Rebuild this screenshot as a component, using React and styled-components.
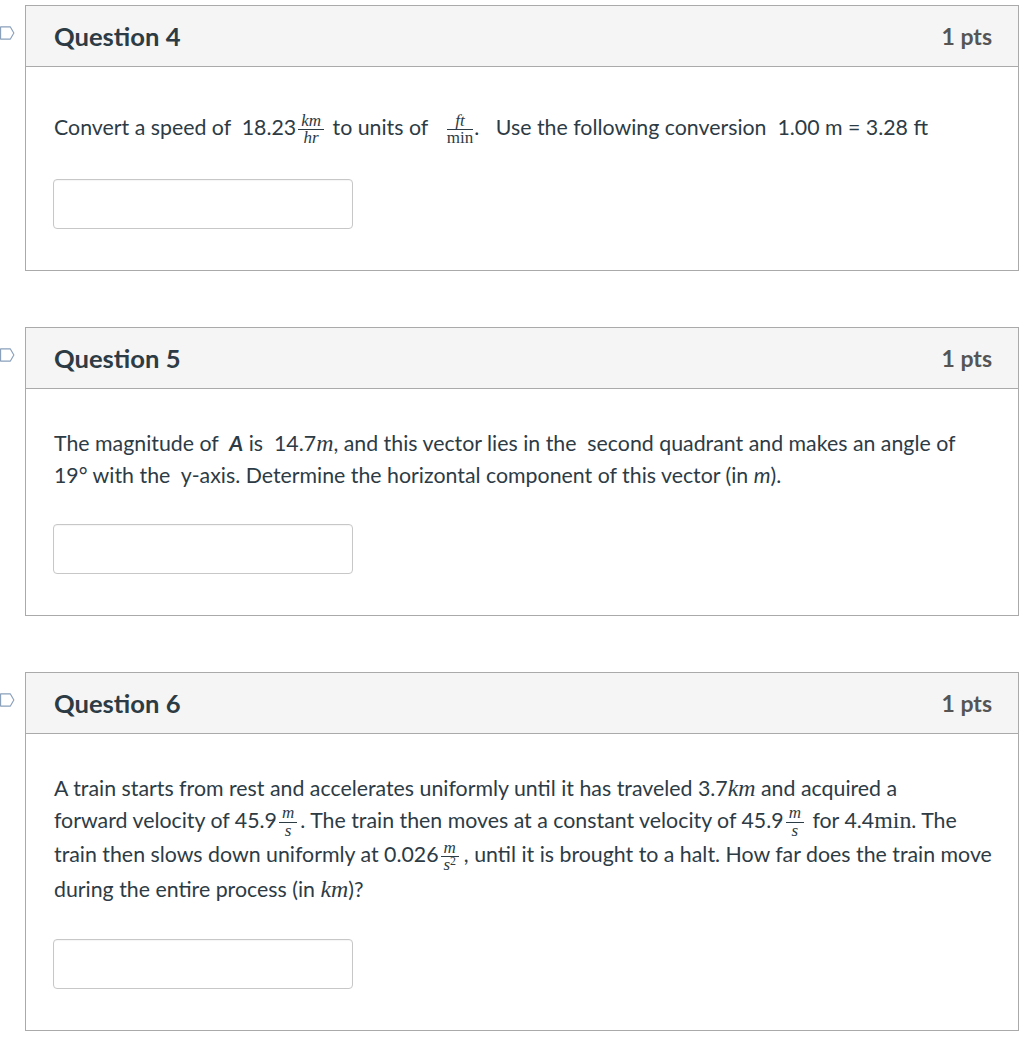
import React from "react";
import styled, { createGlobalStyle } from "styled-components";

const Global = createGlobalStyle`
  html, body { margin: 0; padding: 0; background: #fff; }
  body { font-family: Lato, "Noto Sans", sans-serif; color: #2d3b45; }
`;

const Page = styled.div`
  padding: 5px 5px 20px 0;
  display: flex;
  flex-direction: column;
  gap: 56px;
`;

const Row = styled.div`
  display: flex;
  align-items: flex-start;
`;

const FlagSlot = styled.div`
  width: 25px;
  flex-shrink: 0;
  overflow: hidden;
  padding-top: 16px;
  display: flex;
  justify-content: flex-end;
`;

const Card = styled.section`
  flex: 1;
  border: 1px solid #aaaaaa;
  background: #fff;
`;

const Header = styled.header`
  height: 60px;
  background: #f5f5f5;
  border-bottom: 1px solid #aaaaaa;
  display: flex;
  align-items: center;
  justify-content: space-between;
  padding: 0 26px 0 28px;
`;

const Title = styled.h2`
  margin: 0;
  font-size: 25.6px;
  font-weight: 700;
  color: #2d3b45;
`;

const Points = styled.span`
  font-size: 23px;
  font-weight: 700;
  color: #555;
`;

const Body = styled.div`
  padding: ${(p) => p.$top}px 10px 41px 28px;
`;

const Text = styled.p`
  margin: 0 0 ${(p) => p.$gap}px 0;
  font-size: 21.33px;
  line-height: 32px;
  white-space: nowrap;
`;

const Answer = styled.input`
  display: block;
  margin-left: -1px;
  width: 300px;
  height: 50px;
  box-sizing: border-box;
  border: 1px solid #c7c7c7;
  border-radius: 4px;
  background: #fff;
  box-shadow: inset 0 1px 1px rgba(0, 0, 0, 0.04);
`;

const MathI = styled.span`
  font-family: "Liberation Serif", "DejaVu Serif", serif;
  font-style: ${(p) => (p.$up ? "normal" : "italic")};
  font-size: 1.12em;
  line-height: 1;
`;

const Frac = styled.span`
  display: inline-flex;
  flex-direction: column;
  align-items: center;
  vertical-align: middle;
  font-family: "Liberation Serif", "DejaVu Serif", serif;
  font-style: italic;
  font-size: 0.8em;
  line-height: 0.85;
  margin: 0 ${(p) => p.$r ?? 3}px 0 ${(p) => p.$l ?? 2}px;
`;

const Num = styled.span`
  padding: 0 3px 1px;
  border-bottom: 1px solid #2d3b45;
  align-self: stretch;
  text-align: center;
`;

const Den = styled.span`
  padding-top: 1px;
  font-style: ${(p) => (p.$up ? "normal" : "italic")};
`;

const Sup = styled.sup`
  font-size: 0.7em;
  font-style: normal;
  vertical-align: 0.45em;
  line-height: 0;
`;

const BoldVec = styled.b`
  font-style: italic;
  font-weight: 700;
`;

const Flag = () => (
  <svg width="26" height="24" viewBox="0 0 26 24" style={{ marginRight: 10 }}>
    <path
      d="M1 1.5 H18 L24 12 L18 22.5 H1 Z"
      fill="none"
      stroke="#8aa0bb"
      strokeWidth="2"
      strokeLinejoin="round"
    />
  </svg>
);

const Question = ({ n, top, gap, children }) => (
  <Row>
    <FlagSlot>
      <Flag />
    </FlagSlot>
    <Card>
      <Header>
        <Title>Question {n}</Title>
        <Points>1 pts</Points>
      </Header>
      <Body $top={top}>
        <Text $gap={gap}>{children}</Text>
        <Answer type="text" aria-label={`Answer for question ${n}`} />
      </Body>
    </Card>
  </Row>
);

export default function App() {
  return (
    <>
      <Global />
      <Page>
        <Question n={4} top={44} gap={33}>
          Convert a speed of&nbsp; 18.23
          <Frac>
            <Num>km</Num>
            <Den>hr</Den>
          </Frac>{" "}
          to units of&nbsp;{" "}
          <Frac $l={8} $r={1}>
            <Num>ft</Num>
            <Den $up>min</Den>
          </Frac>
          .&nbsp;&nbsp; Use the following conversion&nbsp; 1.00 m = 3.28 ft
        </Question>
        <Question n={5} top={38} gap={33}>
          The magnitude of&nbsp; <BoldVec>A</BoldVec> is&nbsp; 14.7
          <MathI>m</MathI>, and this vector lies in the&nbsp; second quadrant and
          makes an angle of
          <br />
          19° with the&nbsp; y-axis. Determine the horizontal component of this
          vector (in <i>m</i>).
        </Question>
        <Question n={6} top={38} gap={34}>
          A train starts from rest and accelerates uniformly until it has
          traveled 3.7<MathI>km</MathI> and acquired a
          <br />
          forward velocity of 45.9
          <Frac>
            <Num>m</Num>
            <Den>s</Den>
          </Frac>
          . The train then moves at a constant velocity of 45.9
          <Frac>
            <Num>m</Num>
            <Den>s</Den>
          </Frac>{" "}
          for 4.4<MathI $up>min</MathI>. The
          <br />
          train then slows down uniformly at 0.026
          <Frac $r={5}>
            <Num>m</Num>
            <Den>
              s<Sup>2</Sup>
            </Den>
          </Frac>
          , until it is brought to a halt. How far does the train move
          <br />
          during the entire process (in <MathI>km</MathI>)?
        </Question>
      </Page>
    </>
  );
}
